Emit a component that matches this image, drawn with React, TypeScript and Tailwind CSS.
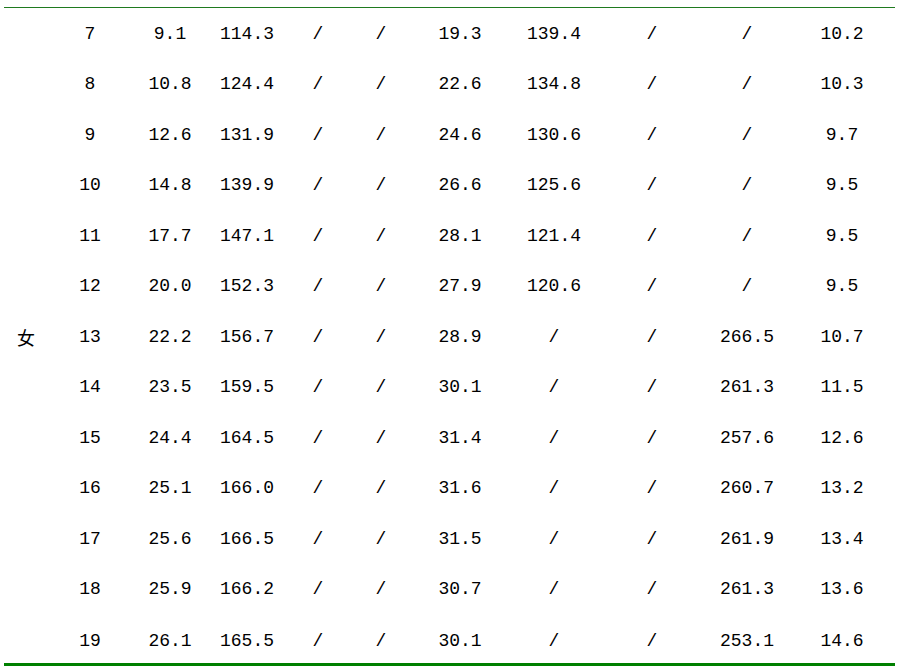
import React from "react";

const rows = [
  ["7", "9.1", "114.3", "/", "/", "19.3", "139.4", "/", "/", "10.2"],
  ["8", "10.8", "124.4", "/", "/", "22.6", "134.8", "/", "/", "10.3"],
  ["9", "12.6", "131.9", "/", "/", "24.6", "130.6", "/", "/", "9.7"],
  ["10", "14.8", "139.9", "/", "/", "26.6", "125.6", "/", "/", "9.5"],
  ["11", "17.7", "147.1", "/", "/", "28.1", "121.4", "/", "/", "9.5"],
  ["12", "20.0", "152.3", "/", "/", "27.9", "120.6", "/", "/", "9.5"],
  ["13", "22.2", "156.7", "/", "/", "28.9", "/", "/", "266.5", "10.7"],
  ["14", "23.5", "159.5", "/", "/", "30.1", "/", "/", "261.3", "11.5"],
  ["15", "24.4", "164.5", "/", "/", "31.4", "/", "/", "257.6", "12.6"],
  ["16", "25.1", "166.0", "/", "/", "31.6", "/", "/", "260.7", "13.2"],
  ["17", "25.6", "166.5", "/", "/", "31.5", "/", "/", "261.9", "13.4"],
  ["18", "25.9", "166.2", "/", "/", "30.7", "/", "/", "261.3", "13.6"],
  ["19", "26.1", "165.5", "/", "/", "30.1", "/", "/", "253.1", "14.6"],
];

const App = () => {
  return (
    <div className="w-[900px] h-[670px] bg-white pt-[7px] pl-[4px]">
      <div className="w-[891px] border-t border-[#1f7a1f] border-b-[3px] border-b-[#008000]">
        {rows.map((row, idx) => (
          <div
            key={idx}
            className={
              idx === rows.length - 1
                ? "grid grid-cols-[44px_84px_76px_78px_64px_62px_96px_92px_104px_86px_104px] h-[48.5px] pt-[6px] items-center text-center text-[18px] text-black font-['Liberation_Mono',monospace]"
                : "grid grid-cols-[44px_84px_76px_78px_64px_62px_96px_92px_104px_86px_104px] h-[50.5px] pt-[2px] items-center text-center text-[18px] text-black font-['Liberation_Mono',monospace]"
            }
          >
            <div className="font-['Noto_Sans_CJK_SC',sans-serif] text-[18px]">
              {idx === 6 ? "女" : ""}
            </div>
            {row.map((cell, i) => (
              <div key={i} className="whitespace-nowrap">
                {cell}
              </div>
            ))}
          </div>
        ))}
      </div>
    </div>
  );
};

export default App;
